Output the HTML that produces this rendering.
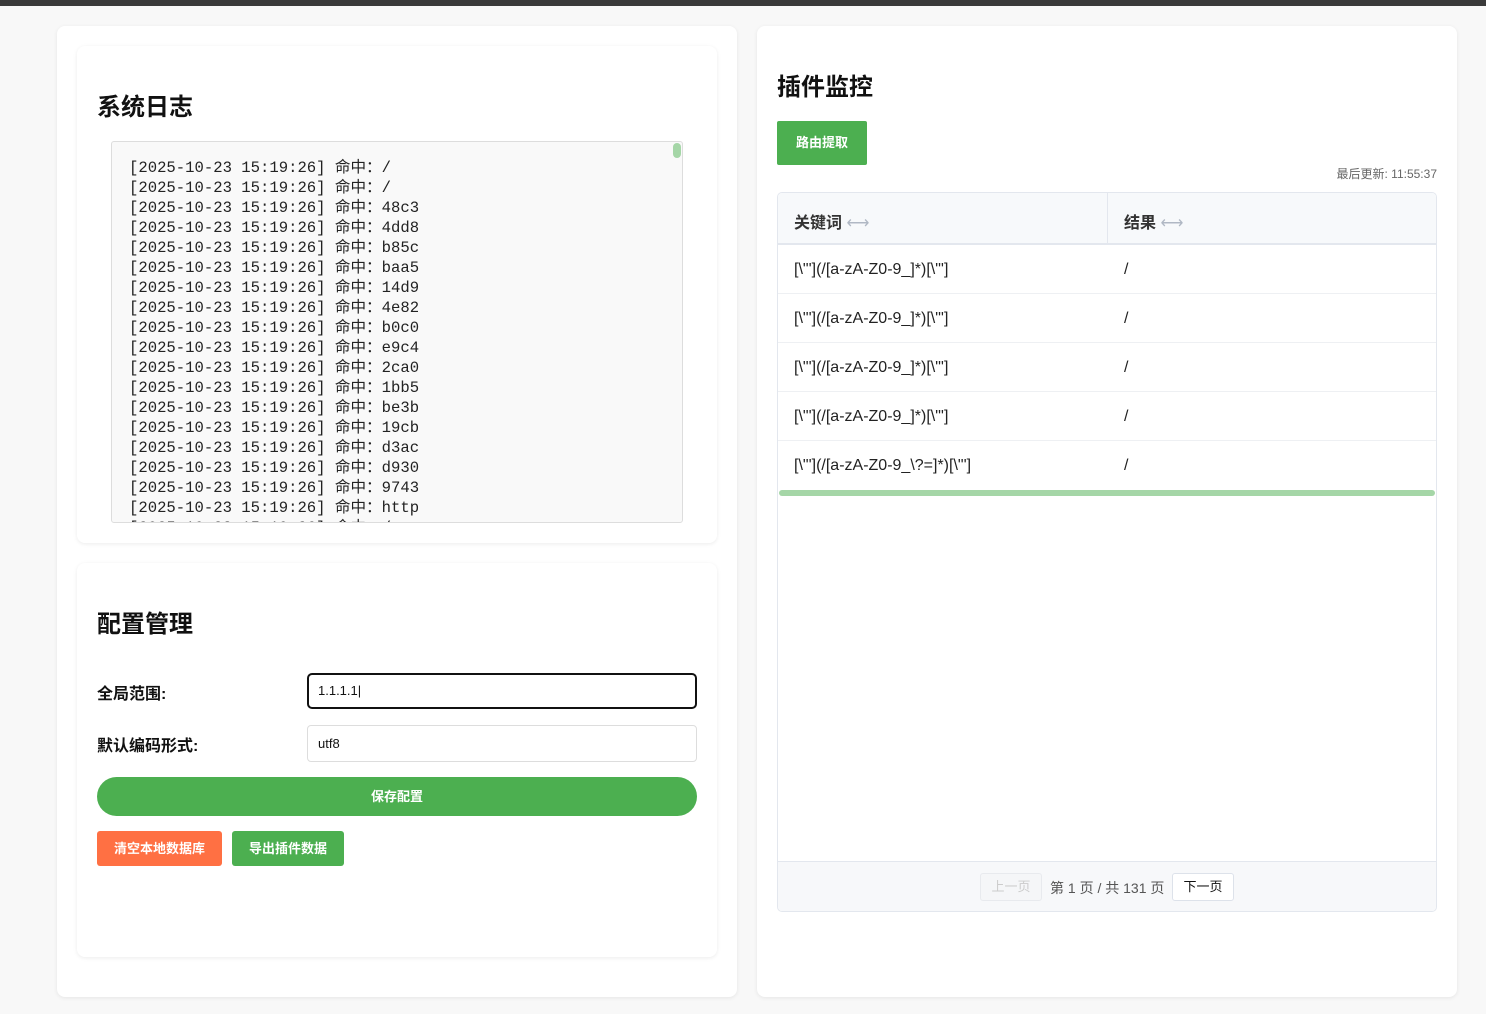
<!DOCTYPE html>
<html><head><meta charset="utf-8"><style>
*{box-sizing:border-box;margin:0;padding:0}
body{width:1486px;height:1014px;background:#f8f8f8;font-family:"Liberation Sans","Noto Sans CJK SC",sans-serif;position:relative;overflow:hidden;color:#222}
.top{position:absolute;left:0;top:0;width:1486px;height:6px;background:#3a3a3a}
.card{position:absolute;background:#fff;border-radius:8px;box-shadow:0 1px 4px rgba(0,0,0,.08)}
h2{position:absolute;font-size:24px;font-weight:bold;color:#111}
.log{position:absolute;left:34px;top:95px;width:572px;height:382px;background:#f9f9f9;border:1px solid #ddd;border-radius:3px;overflow:hidden;padding:16px 0 0 17px;font-family:"Liberation Mono","Noto Sans CJK SC",monospace;font-size:15.6px;line-height:20px;color:#222;white-space:pre}
.sb{position:absolute;right:1px;top:1px;width:8px;height:15px;background:#a5d6a7;border-radius:4px}
label{position:absolute;font-size:16px;font-weight:bold;color:#111}
.inp{position:absolute;left:230px;width:390px;height:37px;border:1px solid #ddd;border-radius:4px;font-size:13px;padding:0 10px;line-height:35px;color:#111}
.btn{position:absolute;color:#fff;font-size:13px;font-weight:bold;text-align:center;border-radius:3px}
.row{position:absolute;left:0;width:658px;height:49px;border-bottom:1px solid #eef0f3;font-size:16px;color:#222}
.row span{position:absolute;top:16px}
</style></head><body>
<div class="top"></div>
<div class="card" style="left:57px;top:26px;width:680px;height:971px"></div>
<div class="card" style="left:77px;top:46px;width:640px;height:497px">
<h2 style="left:20px;top:41px">系统日志</h2>
<div class="log">[2025-10-23 15:19:26] 命中：/
[2025-10-23 15:19:26] 命中：/
[2025-10-23 15:19:26] 命中：48c3
[2025-10-23 15:19:26] 命中：4dd8
[2025-10-23 15:19:26] 命中：b85c
[2025-10-23 15:19:26] 命中：baa5
[2025-10-23 15:19:26] 命中：14d9
[2025-10-23 15:19:26] 命中：4e82
[2025-10-23 15:19:26] 命中：b0c0
[2025-10-23 15:19:26] 命中：e9c4
[2025-10-23 15:19:26] 命中：2ca0
[2025-10-23 15:19:26] 命中：1bb5
[2025-10-23 15:19:26] 命中：be3b
[2025-10-23 15:19:26] 命中：19cb
[2025-10-23 15:19:26] 命中：d3ac
[2025-10-23 15:19:26] 命中：d930
[2025-10-23 15:19:26] 命中：9743
[2025-10-23 15:19:26] 命中：http
[2025-10-23 15:19:26] 命中：/<div class="sb"></div></div>
</div>
<div class="card" style="left:77px;top:563px;width:640px;height:394px">
<h2 style="left:20px;top:41px">配置管理</h2>
<label style="left:20px;top:117px">全局范围:</label>
<div class="inp" style="top:110px;height:36px;border:2px solid #111;border-radius:5px;line-height:32px;padding-left:9px">1.1.1.1|</div>
<label style="left:20px;top:169px">默认编码形式:</label>
<div class="inp" style="top:162px">utf8</div>
<div class="btn" style="left:20px;top:214px;width:600px;height:39px;line-height:39px;border-radius:20px;background:#4caf50">保存配置</div>
<div class="btn" style="left:20px;top:268px;width:125px;height:35px;line-height:35px;background:#ff7043">清空本地数据库</div>
<div class="btn" style="left:155px;top:268px;width:112px;height:35px;line-height:35px;background:#4caf50">导出插件数据</div>
</div>
<div class="card" style="left:757px;top:26px;width:700px;height:971px">
<h2 style="left:20px;top:41px">插件监控</h2>
<div class="btn" style="left:20px;top:95px;width:90px;height:44px;line-height:44px;background:#4caf50;border-radius:2px">路由提取</div>
<div style="position:absolute;right:20px;top:139px;font-size:12px;color:#666">最后更新: 11:55:37</div>
<div style="position:absolute;left:20px;top:166px;width:660px;height:720px;border:1px solid #e3e7ee;border-radius:5px;overflow:hidden">
 <div style="position:absolute;left:0;top:0;width:658px;height:52px;background:#f7f9fb;border-bottom:2px solid #e3e7ee"></div>
 <div style="position:absolute;left:329px;top:0;width:1px;height:50px;background:#e3e7ee"></div>
 <div style="position:absolute;left:16px;top:16px;font-size:16px;font-weight:bold;color:#333">关键词 <span style="color:#b0b8c4;font-weight:normal">⟷</span></div>
 <div style="position:absolute;left:346px;top:16px;font-size:16px;font-weight:bold;color:#333">结果 <span style="color:#b0b8c4;font-weight:normal">⟷</span></div>
 <div class="row" style="top:52px"><span style="left:16px">[\"'](/[a-zA-Z0-9_]*)[\"']</span><span style="left:346px">/</span></div>
 <div class="row" style="top:101px"><span style="left:16px">[\"'](/[a-zA-Z0-9_]*)[\"']</span><span style="left:346px">/</span></div>
 <div class="row" style="top:150px"><span style="left:16px">[\"'](/[a-zA-Z0-9_]*)[\"']</span><span style="left:346px">/</span></div>
 <div class="row" style="top:199px"><span style="left:16px">[\"'](/[a-zA-Z0-9_]*)[\"']</span><span style="left:346px">/</span></div>
 <div class="row" style="top:248px;border:none"><span style="left:16px">[\"'](/[a-zA-Z0-9_\?=]*)[\"']</span><span style="left:346px">/</span></div>
 <div style="position:absolute;left:1px;top:297px;width:656px;height:6px;background:#a5d6a7;border-radius:3px"></div>
 <div style="position:absolute;left:0;top:668px;width:658px;height:50px;background:#f7f8fa;border-top:1px solid #e3e7ee"></div>
 <div style="position:absolute;left:202px;top:680px;width:62px;height:28px;border:1px solid #e8eaee;border-radius:3px;color:#ccc;font-size:13px;text-align:center;line-height:26px;background:#f5f6f8">上一页</div>
 <div style="position:absolute;left:272px;top:685px;font-size:14px;color:#555">第 1 页 / 共 131 页</div>
 <div style="position:absolute;left:394px;top:680px;width:62px;height:28px;border:1px solid #dde2ea;border-radius:3px;color:#111;font-size:13px;text-align:center;line-height:26px;background:#fff">下一页</div>
</div>
</div>
</body></html>
